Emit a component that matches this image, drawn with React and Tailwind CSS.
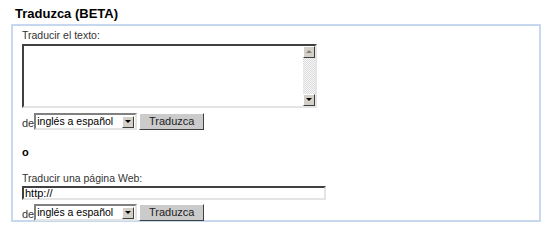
import React from 'react';

const font = { fontFamily: '"Liberation Sans", Arial, sans-serif' };

function ArrowBtn({ dir = 'down', className = '' }) {
  return (
    <div
      className={`flex shrink-0 items-center justify-center w-[12px] h-[12px] bg-[#d4d0c8] border border-t-white border-l-white border-b-[#404040] border-r-[#404040] ${className}`}
    >
      <svg width="6" height="4" viewBox="0 0 6 4">
        {dir === 'down' ? (
          <path d="M0 0h6L3 3z" fill="#000" />
        ) : (
          <path d="M0 3h6L3 0z" fill="#808080" />
        )}
      </svg>
    </div>
  );
}

function LangSelect() {
  return (
    <div className="flex items-center w-[103px] h-[17px] bg-white border-2 border-t-[#808080] border-l-[#808080] border-b-[#e4e4e4] border-r-[#e4e4e4]">
      <span className="flex-1 overflow-hidden whitespace-nowrap pl-[1px] text-[10.5px] leading-[13px] text-black">
        inglés a español
      </span>
      <ArrowBtn className="mr-[1px]" />
    </div>
  );
}

function TranslateRow() {
  return (
    <div className="flex items-center h-[17px]">
      <span className="text-[11px] leading-[17px] text-[#333] pt-[3px]">de</span>
      <LangSelect />
      <button className="ml-[2px] w-[65px] h-[17px] bg-[#cbcbcb] border border-t-white border-l-white border-b-[#404040] border-r-[#404040] text-[11px] leading-[13px] text-[#222]">
        Traduzca
      </button>
    </div>
  );
}

export default function App() {
  return (
    <div className="w-[550px] h-[233px] bg-white" style={font}>
      {/* Header */}
      <div className="pl-[15px] pt-[6px] h-[24px] text-[13px] leading-[15px] font-bold text-black">
        Traduzca (BETA)
      </div>

      {/* Panel */}
      <div className="ml-[11px] w-[530px] h-[198px] border-2 border-[#c6d8ee] pl-[9px] pt-[3px] text-[#333]">
        <div className="text-[10.5px] leading-[13px] h-[15px]">Traducir el texto:</div>

        {/* Textarea */}
        <div className="flex w-[295px] h-[64px] bg-white border-2 border-t-[#404040] border-l-[#404040] border-b-[#e4e4e4] border-r-[#e4e4e4]">
          <div className="flex-1" />
          <div className="flex flex-col justify-between w-[12px] bg-[repeating-conic-gradient(#dcdcdc_0%_25%,#f6f6f6_0%_50%)] bg-[length:2px_2px]">
            <ArrowBtn dir="up" />
            <ArrowBtn dir="down" />
          </div>
        </div>

        <div className="mt-[5px]">
          <TranslateRow />
        </div>

        <div className="mt-[16px] text-[11px] leading-[13px] font-bold text-black">o</div>

        <div className="mt-[13px] text-[10.5px] leading-[13px] h-[14px]">Traducir una página Web:</div>

        {/* URL input */}
        <div className="w-[304px] h-[14px] bg-white border-2 border-t-[#404040] border-l-[#404040] border-b-[#e4e4e4] border-r-[#e4e4e4] pl-[1px] text-[11px] leading-[10px] text-black">
          http://
        </div>

        <div className="mt-[4px]">
          <TranslateRow />
        </div>
      </div>
    </div>
  );
}
